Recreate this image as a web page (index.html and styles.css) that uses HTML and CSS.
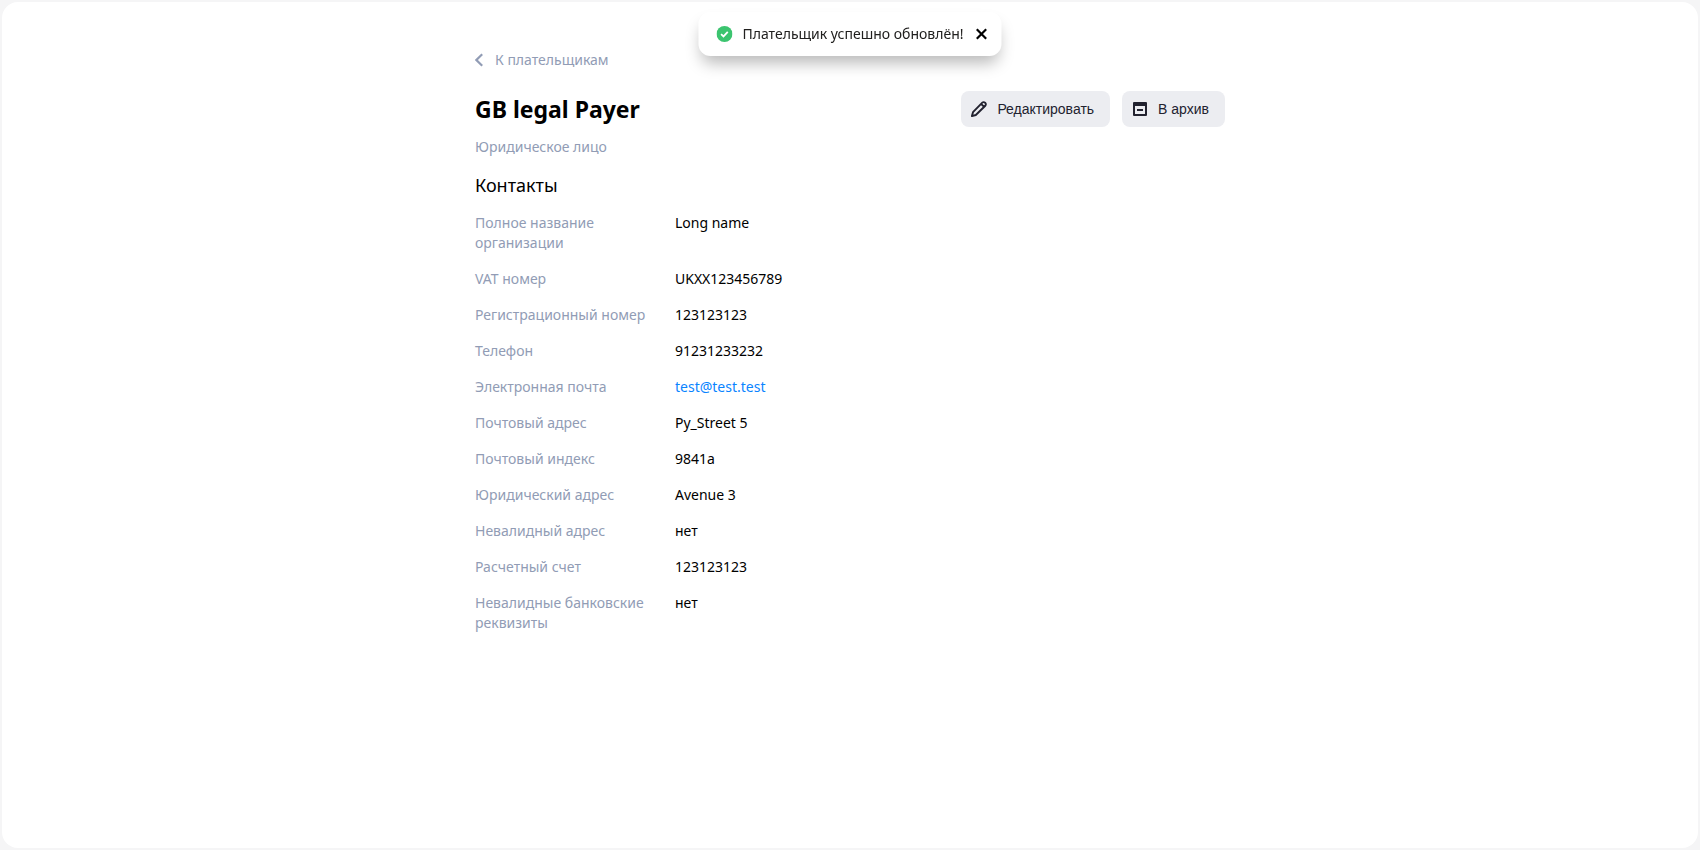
FILE: index.html
```html
<!DOCTYPE html>
<html lang="ru">
<head>
<meta charset="utf-8">
<meta name="viewport" content="width=device-width, initial-scale=1">
<title>GB legal Payer</title>
<link rel="stylesheet" href="styles.css">
</head>
<body>
<div class="page">
  <div class="toast" role="status">
    <svg class="toast-icon" viewBox="0 0 16 16" aria-hidden="true"><circle cx="8" cy="8" r="8" fill="#3bc46f"/><path d="M4.6 8.1 7 10.4l4.3-4.6" fill="none" stroke="#fff" stroke-width="1.8"/></svg>
    <span class="toast-text">Плательщик успешно обновлён!</span>
    <button class="toast-close" type="button" aria-label="Закрыть"><svg viewBox="0 0 12 12" aria-hidden="true"><path d="M1.3 1.3l9.4 9.4M10.7 1.3l-9.4 9.4" fill="none" stroke="#000" stroke-width="2.2"/></svg></button>
  </div>
  <main class="content">
    <a class="back" href="#payers"><svg viewBox="0 0 8 14" aria-hidden="true"><path d="M7.2 1.2 1.4 7l5.8 5.8" fill="none" stroke="#919cb5" stroke-width="2.2"/></svg>К плательщикам</a>
    <header class="head">
      <h1 class="title">GB legal Payer</h1>
      <div class="actions">
        <button class="action" type="button"><svg viewBox="0 0 16 16" aria-hidden="true"><path d="M.9 15.1 2 11.2 11.3 1.7a1.9 1.9 0 0 1 2.7 0l.3.3a1.9 1.9 0 0 1 0 2.7L4.8 14zM10.2 3l2.9 2.9" fill="none" stroke="#22222f" stroke-width="1.9" stroke-linejoin="round"/></svg>Редактировать</button>
        <button class="action" type="button"><svg viewBox="0 0 16 16" aria-hidden="true"><path d="M2 1h12a1 1 0 0 1 1 1v12a1 1 0 0 1-1 1H2a1 1 0 0 1-1-1V2a1 1 0 0 1 1-1zm1 4v8h10V5zm2 3h6v2H5z" fill="#22222f" fill-rule="evenodd"/></svg>В архив</button>
      </div>
    </header>
    <p class="kind">Юридическое лицо</p>
    <h2 class="section">Контакты</h2>
    <dl class="fields">
      <dt>Полное название организации</dt><dd>Long name</dd>
      <dt>VAT номер</dt><dd>UKXX123456789</dd>
      <dt>Регистрационный номер</dt><dd>123123123</dd>
      <dt>Телефон</dt><dd>91231233232</dd>
      <dt>Электронная почта</dt><dd><a class="mail" href="mailto:test@test.test">test@test.test</a></dd>
      <dt>Почтовый адрес</dt><dd>Py_Street 5</dd>
      <dt>Почтовый индекс</dt><dd>9841a</dd>
      <dt>Юридический адрес</dt><dd>Avenue 3</dd>
      <dt>Невалидный адрес</dt><dd>нет</dd>
      <dt>Расчетный счет</dt><dd>123123123</dd>
      <dt>Невалидные банковские реквизиты</dt><dd>нет</dd>
    </dl>
  </main>
</div>
</body>
</html>
```
FILE: styles.css
```css
* { box-sizing: border-box; }
body {
  display: flex;
  min-height: 100vh;
  margin: 0;
  padding: 2px;
  background: #f5f5f6;
  color: #000;
  font: 14px/20px "Noto Sans", sans-serif;
}
.page {
  flex: 1;
  padding: 48px 24px;
  border-radius: 16px;
  background: #fff;
}
.content { max-width: 750px; margin: 0 auto; }
.toast {
  position: fixed;
  top: 12px;
  left: 50%;
  transform: translateX(-50%);
  display: flex;
  align-items: center;
  height: 44px;
  padding: 0 14px 0 18px;
  border-radius: 12px;
  background: #fff;
  box-shadow: 0 10px 16px -3px rgba(0, 0, 0, .28);
  color: #21201f;
  white-space: nowrap;
}
.toast-icon { width: 16px; height: 16px; margin-right: 10px; }
.toast-close {
  display: flex;
  margin-left: 12px;
  padding: 0;
  border: 0;
  background: none;
}
.toast-close svg { width: 12px; height: 12px; }
.back {
  display: inline-flex;
  align-items: center;
  gap: 12px;
  color: #919cb5;
  text-decoration: none;
  vertical-align: top;
}
.back svg { width: 8px; height: 14px; }
.head {
  display: flex;
  align-items: center;
  justify-content: space-between;
  margin-top: 21px;
}
.title { margin: 0; font-size: 23px; line-height: 36px; font-weight: 700; }
.actions { display: flex; gap: 12px; }
.action {
  display: flex;
  align-items: center;
  gap: 10px;
  height: 36px;
  padding: 0 16px 0 10px;
  border: 0;
  border-radius: 8px;
  background: #ecedf1;
  color: #22222f;
  font: 14px/20px "Liberation Sans", Arial, sans-serif;
}
.action svg { width: 16px; height: 16px; }
.kind { margin: 10px 0 0; color: #919cb5; }
.section { margin: 16px 0; font-size: 18px; line-height: 24px; font-weight: 400; }
.fields {
  display: grid;
  grid-template-columns: 176px 1fr;
  gap: 16px 24px;
  margin: 0;
}
.fields dt { color: #919cb5; }
.fields dd { margin: 0; }
.mail { color: #0a84ff; text-decoration: none; }
```
